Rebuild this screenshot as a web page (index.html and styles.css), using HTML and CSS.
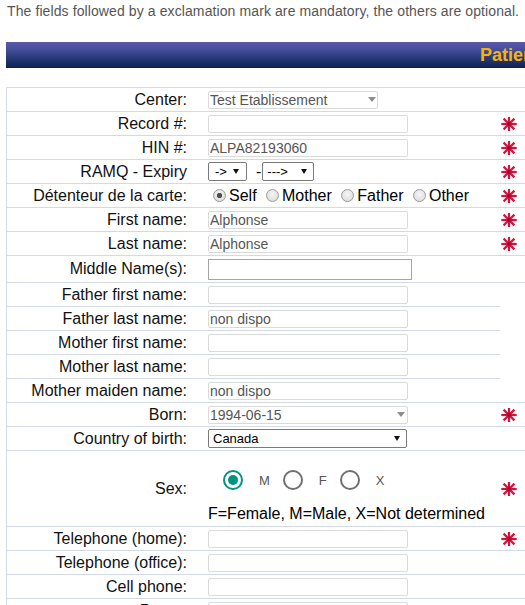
FILE: index.html
```html
<!DOCTYPE html>
<html lang="en">
<head>
<meta charset="utf-8">
<title>Patient</title>
<link rel="stylesheet" href="styles.css">
</head>
<body>
<p class="note">The fields followed by a exclamation mark are mandatory, the others are optional.</p>
<div class="bar"><span class="bar-title">Patient identification</span></div>

<div class="form">
  <div class="row">
    <div class="lab">Center:</div>
    <div class="fld"><div class="dd dd-center"><span>Test Etablissement</span><i class="tri-grey"></i></div></div>
    <div class="req"></div>
  </div>
  <div class="row">
    <div class="lab">Record #:</div>
    <div class="fld"><input class="txt" type="text" value=""></div>
    <div class="req"><svg class="star" viewBox="0 0 16 16"><use href="#star"/></svg></div>
  </div>
  <div class="row">
    <div class="lab">HIN #:</div>
    <div class="fld"><input class="txt" type="text" value="ALPA82193060"></div>
    <div class="req"><svg class="star" viewBox="0 0 16 16"><use href="#star"/></svg></div>
  </div>
  <div class="row">
    <div class="lab">RAMQ - Expiry</div>
    <div class="fld">
      <div class="sel sel-a"><span>-&gt;</span><i class="tri-black"></i></div>
      <span class="dash">-</span>
      <div class="sel sel-b"><span>---&gt;</span><i class="tri-black"></i></div>
    </div>
    <div class="req"><svg class="star" viewBox="0 0 16 16"><use href="#star"/></svg></div>
  </div>
  <div class="row">
    <div class="lab">Détenteur de la carte:</div>
    <div class="fld"><div class="holder"><span class="cr on"></span>Self <span class="cr"></span>Mother <span class="cr"></span>Father <span class="cr"></span>Other</div></div>
    <div class="req"><svg class="star" viewBox="0 0 16 16"><use href="#star"/></svg></div>
  </div>
  <div class="row">
    <div class="lab">First name:</div>
    <div class="fld"><input class="txt" type="text" value="Alphonse"></div>
    <div class="req"><svg class="star" viewBox="0 0 16 16"><use href="#star"/></svg></div>
  </div>
  <div class="row">
    <div class="lab">Last name:</div>
    <div class="fld"><input class="txt" type="text" value="Alphonse"></div>
    <div class="req"><svg class="star" viewBox="0 0 16 16"><use href="#star"/></svg></div>
  </div>
  <div class="row tall">
    <div class="lab">Middle Name(s):</div>
    <div class="fld"><input class="txt-plain" type="text" value=""></div>
    <div class="req"></div>
  </div>
  <div class="row">
    <div class="lab">Father first name:</div>
    <div class="fld"><input class="txt" type="text" value=""></div>
  </div>
  <div class="row">
    <div class="lab">Father last name:</div>
    <div class="fld"><input class="txt" type="text" value="non dispo"></div>
  </div>
  <div class="row">
    <div class="lab">Mother first name:</div>
    <div class="fld"><input class="txt" type="text" value=""></div>
  </div>
  <div class="row">
    <div class="lab">Mother last name:</div>
    <div class="fld"><input class="txt" type="text" value=""></div>
  </div>
  <div class="row">
    <div class="lab">Mother maiden name:</div>
    <div class="fld"><input class="txt" type="text" value="non dispo"></div>
    <div class="req"></div>
  </div>
  <div class="row">
    <div class="lab">Born:</div>
    <div class="fld"><div class="dd dd-born"><span>1994-06-15</span><i class="tri-grey"></i></div></div>
    <div class="req"><svg class="star" viewBox="0 0 16 16"><use href="#star"/></svg></div>
  </div>
  <div class="row">
    <div class="lab">Country of birth:</div>
    <div class="fld"><div class="sel sel-country"><span>Canada</span><i class="tri-black"></i></div></div>
    <div class="req"></div>
  </div>
  <div class="row sex">
    <div class="lab">Sex:</div>
    <div class="fld sexf">
      <div class="sexopts">
        <span class="opt"><span class="mr on"></span>M</span>
        <span class="opt"><span class="mr"></span>F</span>
        <span class="opt"><span class="mr"></span>X</span>
      </div>
      <div class="legend">F=Female, M=Male, X=Not determined</div>
    </div>
    <div class="req"><svg class="star" viewBox="0 0 16 16"><use href="#star"/></svg></div>
  </div>
  <div class="row">
    <div class="lab">Telephone (home):</div>
    <div class="fld"><input class="txt" type="text" value=""></div>
    <div class="req"><svg class="star" viewBox="0 0 16 16"><use href="#star"/></svg></div>
  </div>
  <div class="row">
    <div class="lab">Telephone (office):</div>
    <div class="fld"><input class="txt" type="text" value=""></div>
    <div class="req"></div>
  </div>
  <div class="row">
    <div class="lab">Cell phone:</div>
    <div class="fld"><input class="txt" type="text" value=""></div>
    <div class="req"></div>
  </div>
  <div class="row">
    <div class="lab">Pager:</div>
    <div class="fld"><input class="txt" type="text" value=""></div>
    <div class="req"></div>
  </div>
</div>

<svg class="defs" width="0" height="0" aria-hidden="true">
  <symbol id="star" viewBox="0 0 16 16">
    <g stroke="#d8103d" stroke-width="2.2" stroke-linecap="butt">
      <line x1="8" y1="1" x2="8" y2="15"/>
      <line x1="0.3" y1="8" x2="15.7" y2="8"/>
      <line x1="2.6" y1="2.6" x2="13.4" y2="13.4"/>
      <line x1="13.4" y1="2.6" x2="2.6" y2="13.4"/>
    </g>
    <circle cx="8" cy="8" r="2" fill="#9e0c2a"/>
  </symbol>
</svg>
</body>
</html>
```

FILE: styles.css
```css
html {
  overflow: hidden;
}

body {
  margin: 0;
  background: #fff;
  color: #111;
  font-family: "Liberation Sans", Arial, sans-serif;
}

.note {
  margin: 3px 0 0 7px;
  font-size: 14px;
  line-height: 16px;
  letter-spacing: 0.1px;
  color: #555;
  white-space: nowrap;
}

.bar {
  margin: 23px 0 0 6px;
  width: 700px;
  height: 26px;
  box-sizing: border-box;
  padding-left: 474px;
  display: flex;
  align-items: center;
  background: linear-gradient(to bottom, #5a5aac 0%, #454d9a 30%, #263775 65%, #0e2251 100%);
}

.bar-title {
  color: #f6b40a;
  font-weight: bold;
  font-size: 18px;
  white-space: nowrap;
}

.form {
  margin: 19px 0 0 6px;
  width: 534px;
  border-left: 1px solid #d4d9e6;
  border-top: 1px solid #d4d9e6;
}

.row {
  display: flex;
}

.row > div {
  height: 24px;
  box-sizing: border-box;
  border-bottom: 1px solid #d4d9e6;
  display: flex;
  align-items: center;
}

.row.tall > div {
  height: 27px;
}

.row.sex > div {
  height: 76px;
}

.lab {
  width: 194px;
  padding-right: 14px;
  justify-content: flex-end;
  font-size: 16px;
  white-space: nowrap;
  color: #111;
}

.fld {
  width: 299px;
  padding-left: 7px;
}

.req {
  width: 40px;
  padding-left: 1px;
}

.star {
  width: 16px;
  height: 16px;
  display: block;
}

.defs {
  display: block;
  width: 0;
  height: 0;
  overflow: hidden;
}

/* text inputs */
.txt {
  width: 200px;
  height: 18px;
  box-sizing: border-box;
  margin: 0;
  padding: 0 1px;
  border: 1px solid #dadada;
  border-radius: 2px;
  background: #fff;
  font: 14px "Liberation Sans", Arial, sans-serif;
  color: #555;
  outline: none;
}

.txt-plain {
  width: 204px;
  height: 21px;
  box-sizing: border-box;
  margin: 0;
  padding: 0 2px;
  border: 1px solid #a6a6a6;
  background: #fff;
  font: 14px "Liberation Sans", Arial, sans-serif;
  color: #111;
  outline: none;
}

/* styled dropdowns (light) */
.dd {
  height: 18px;
  box-sizing: border-box;
  border: 1px solid #dadada;
  border-radius: 2px;
  display: flex;
  align-items: center;
  justify-content: space-between;
  padding: 0 1px;
  font-size: 14px;
  color: #555;
  white-space: nowrap;
}

.dd-center {
  width: 170px;
}

.dd-born {
  width: 200px;
  padding-right: 2px;
}

.tri-grey {
  width: 0;
  height: 0;
  border-left: 4px solid transparent;
  border-right: 4px solid transparent;
  border-top: 5px solid #8c8c8c;
}

/* native-looking selects */
.sel {
  height: 19px;
  box-sizing: border-box;
  border: 1px solid #7a7a7a;
  border-radius: 2px;
  display: flex;
  align-items: center;
  justify-content: space-between;
  font-size: 13px;
  color: #000;
  background: #fff;
  white-space: nowrap;
}

.sel-a {
  width: 39px;
  padding: 0 7px 0 6px;
  margin-right: 9px;
}

.sel-b {
  width: 52px;
  padding: 0 6px 0 4px;
  margin-left: 1px;
}

.sel-country {
  width: 199px;
  padding: 0 6px 0 4px;
}

.dash {
  font-size: 16px;
  color: #111;
}

.tri-black {
  width: 0;
  height: 0;
  border-left: 3px solid transparent;
  border-right: 3px solid transparent;
  border-top: 5px solid #111;
}

/* classic radios */
.holder {
  font-size: 16px;
  line-height: 18px;
  color: #000;
  white-space: nowrap;
}

.cr {
  display: inline-block;
  width: 13px;
  height: 13px;
  box-sizing: border-box;
  margin: 0 3px 0 5px;
  border: 1px solid #9c9c9c;
  border-radius: 50%;
  vertical-align: -1px;
  background: radial-gradient(circle at 50% 40%, #f6f6f6 0%, #d6d6d6 100%);
}

.cr.on {
  background:
    radial-gradient(circle at center, #505050 0, #505050 2.3px, transparent 3px),
    radial-gradient(circle at 50% 40%, #f6f6f6 0%, #d6d6d6 100%);
}

/* sex row */
.sexf {
  flex-direction: column;
  align-items: flex-start !important;
  justify-content: flex-start;
  padding-top: 19px;
}

.sexopts {
  display: flex;
  align-items: center;
  height: 20px;
  padding-left: 15px;
}

.opt {
  display: flex;
  align-items: center;
  gap: 16px;
  margin-right: 13px;
  font-size: 13px;
  color: #555;
}

.mr {
  width: 20px;
  height: 20px;
  box-sizing: border-box;
  border: 2px solid #707070;
  border-radius: 50%;
  display: flex;
  align-items: center;
  justify-content: center;
}

.mr.on {
  border-color: #009282;
}

.mr.on::after {
  content: "";
  width: 10px;
  height: 10px;
  border-radius: 50%;
  background: #009282;
}

.legend {
  margin-top: 15px;
  font-size: 16px;
  line-height: 18px;
  color: #000;
  white-space: nowrap;
}
```
